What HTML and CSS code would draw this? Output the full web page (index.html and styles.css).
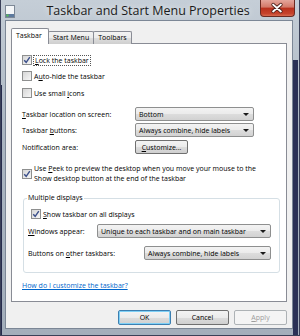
FILE: index.html
```html
<!DOCTYPE html>
<html lang="en">
<head>
    <meta charset="UTF-8">
    <title>Taskbar and Start Menu Properties</title>
    <link rel="stylesheet" href="styles.css">
</head>
<body>
    <div class="window">
        <div class="titlebar">
            <svg class="app-icon" width="10" height="13" viewBox="0 0 10 13">
                <rect x="0.5" y="0.5" width="9" height="12" fill="#f4f6f8" stroke="#7d8896"/>
                <rect x="1" y="9" width="8" height="3" fill="#5d7a9e"/>
                <circle cx="2.5" cy="10.5" r="1.2" fill="#5cb85c"/>
            </svg>
            <span class="title">Taskbar and Start Menu Properties</span>
            <div class="close">
                <svg width="35" height="17" viewBox="0 0 35 17">
                    <path d="M13.5 4.5 L21.5 11.5 M21.5 4.5 L13.5 11.5" stroke="#4a1d18" stroke-width="3.6" stroke-linecap="round"/>
                    <path d="M13.5 4.5 L21.5 11.5 M21.5 4.5 L13.5 11.5" stroke="#ffffff" stroke-width="2" stroke-linecap="round"/>
                </svg>
            </div>
        </div>

        <div class="client">
            <div class="tabs">
                <div class="tab active">Taskbar</div>
                <div class="tab">Start Menu</div>
                <div class="tab">Toolbars</div>
            </div>

            <div class="panel">
                <div class="cb-row">
                    <span class="check on"><svg width="8" height="8" viewBox="0 0 8 8"><path d="M1.2 4.2 L3.2 6.3 L6.8 1.2" fill="none" stroke="#3b4f8a" stroke-width="1.4"/></svg></span>
                    <span class="focus"><u>L</u>ock the taskbar</span>
                </div>
                <div class="cb-row">
                    <span class="check"></span>
                    <span>A<u>u</u>to-hide the taskbar</span>
                </div>
                <div class="cb-row third">
                    <span class="check"></span>
                    <span>Use small <u>i</u>cons</span>
                </div>

                <div class="field first">
                    <span class="label wide"><u>T</u>askbar location on screen:</span>
                    <div class="select w119"><span>Bottom</span><i class="arrow"></i></div>
                </div>
                <div class="field second">
                    <span class="label wide">Taskbar <u>b</u>uttons:</span>
                    <div class="select w119"><span>Always combine, hide labels</span><i class="arrow"></i></div>
                </div>
                <div class="field third">
                    <span class="label wide">Notification area:</span>
                    <div class="btn small"><u>C</u>ustomize...</div>
                </div>

                <div class="peek">
                    <span class="check on"><svg width="8" height="8" viewBox="0 0 8 8"><path d="M1.2 4.2 L3.2 6.3 L6.8 1.2" fill="none" stroke="#3b4f8a" stroke-width="1.4"/></svg></span>
                    <span class="peek-text">Use <u>P</u>eek to preview the desktop when you move your mouse to the<br>Show desktop button at the end of the taskbar</span>
                </div>

                <fieldset class="group">
                    <legend>Multiple displays</legend>
                    <div class="cb-row show">
                        <span class="check on"><svg width="8" height="8" viewBox="0 0 8 8"><path d="M1.2 4.2 L3.2 6.3 L6.8 1.2" fill="none" stroke="#3b4f8a" stroke-width="1.4"/></svg></span>
                        <span><u>S</u>how taskbar on all displays</span>
                    </div>
                    <div class="field appear">
                        <span class="label w69"><u>W</u>indows appear:</span>
                        <div class="select w174"><span>Unique to each taskbar and on main taskbar</span><i class="arrow"></i></div>
                    </div>
                    <div class="field others">
                        <span class="label w116">Buttons on <u>o</u>ther taskbars:</span>
                        <div class="select w127"><span>Always combine, hide labels</span><i class="arrow"></i></div>
                    </div>
                </fieldset>

                <a class="help" href="#">How do I customize the taskbar?</a>
            </div>

            <div class="buttons">
                <div class="btn default">OK</div>
                <div class="btn">Cancel</div>
                <div class="btn disabled"><u>A</u>pply</div>
            </div>
        </div>
    </div>
</body>
</html>
```

FILE: styles.css
```css
body {
    margin: 0;
    font-family: 'Open Sans', 'Liberation Sans', sans-serif;
    font-size: 7px;
    color: #000000;
    background: #1f2442;
}
.window {
    width: 300px;
    height: 336px;
    box-sizing: border-box;
    display: flex;
    flex-direction: column;
    border: 1px solid #3a4058;
    border-top: none;
    background:
        linear-gradient(#2b3156, #2b3156) 292px 60px / 5px 280px no-repeat,
        linear-gradient(#262b4c, #262b4c) 0 85px / 1px 260px no-repeat,
        linear-gradient(#c5ced7, #aab5c1 40%, #a3aebb);
}
.titlebar {
    height: 20px;
    display: flex;
    align-items: flex-start;
}
.app-icon {
    margin: 5px 0 0 4px;
}
.title {
    flex: 1;
    text-align: center;
    font-size: 12.5px;
    line-height: 22px;
    padding-left: 21px;
    color: #1b1b1b;
    text-shadow: 0 0 6px rgba(255, 255, 255, 0.9);
    white-space: nowrap;
}
.close {
    width: 35px;
    height: 17px;
    margin-right: 4px;
    box-sizing: border-box;
    border: 1px solid #6b2a22;
    border-top: none;
    border-radius: 0 0 4px 4px;
    background: linear-gradient(#e4a59b, #d37868 45%, #b8301d 50%, #c6432c 85%, #d86a50);
    display: flex;
}
.close svg {
    margin-left: -1px;
}
.client {
    flex: 1;
    margin: 0 6px 6px 4px;
    padding: 7px 5px 0 5px;
    background: #f0f0f0;
    border: 1px solid #7c8796;
    display: flex;
    flex-direction: column;
}
/* Tabs */
.tabs {
    display: flex;
    align-items: flex-end;
    height: 16px;
    margin-bottom: -1px;
    position: relative;
    z-index: 1;
}
.tab {
    height: 13px;
    box-sizing: border-box;
    padding: 0 4px;
    line-height: 12px;
    border: 1px solid #898c95;
    border-bottom: none;
    border-radius: 2px 2px 0 0;
    margin-left: -1px;
    background: linear-gradient(#f3f3f3, #ebebeb 50%, #dddddd 50%, #cfcfcf);
}
.tab.active {
    height: 16px;
    width: 38px;
    margin-left: 0;
    line-height: 14px;
    background: #ffffff;
    z-index: 2;
    position: relative;
}
.panel {
    height: 259px;
    box-sizing: border-box;
    background: #ffffff;
    border: 1px solid #898c95;
    padding: 8px 0 0 10px;
    display: flex;
    flex-direction: column;
    align-items: flex-start;
}
/* Checkboxes */
.cb-row {
    height: 16px;
    display: flex;
    align-items: center;
}
.cb-row.third {
    margin-top: 1px;
}
.check {
    width: 8px;
    height: 8px;
    border: 1px solid #8e8f8f;
    background: linear-gradient(135deg, #d6d6d6, #f6f6f6);
    margin-right: 2px;
    display: flex;
    flex-shrink: 0;
}
.focus {
    outline: 1px dotted #555555;
    outline-offset: 0;
    padding: 0 1px;
}
/* Form rows */
.field {
    height: 14px;
    display: flex;
    align-items: center;
}
.field.first {
    margin-top: 6px;
}
.field.second {
    margin-top: 2px;
}
.field.third {
    margin-top: 3px;
}
.label {
    white-space: nowrap;
}
.label.wide { width: 113px; }
.label.w69 { width: 69px; }
.label.w116 { width: 116px; }
.select {
    height: 14px;
    box-sizing: border-box;
    display: flex;
    align-items: center;
    padding: 0 4px 0 3px;
    border: 1px solid #8e8f8f;
    border-radius: 2px;
    background: linear-gradient(#f3f3f3, #ebebeb 50%, #dddddd 50%, #d2d2d2);
    white-space: nowrap;
}
.select span {
    flex: 1;
}
.w119 { width: 119px; }
.w174 { width: 174px; }
.w127 { width: 127px; }
.arrow {
    width: 0;
    height: 0;
    border-left: 3px solid transparent;
    border-right: 3px solid transparent;
    border-top: 3px solid #1a1a1a;
}
.btn {
    width: 53px;
    height: 15px;
    box-sizing: border-box;
    display: flex;
    align-items: center;
    justify-content: center;
    border: 1px solid #707070;
    border-radius: 2px;
    background: linear-gradient(#f3f3f3, #ebebeb 50%, #dddddd 50%, #cfcfcf);
}
.btn.small {
    height: 14px;
}
.btn.default {
    border-color: #3c7fb1;
    box-shadow: inset 0 0 0 1px #7fd0f6;
}
.btn.disabled {
    color: #9d9d9d;
    border-color: #adb2b5;
    background: #f4f4f4;
}
/* Peek */
.peek {
    margin-top: 10px;
    display: flex;
    align-items: center;
}
.peek-text {
    line-height: 10px;
    white-space: nowrap;
}
/* Group box */
.group {
    margin: 9px 0 0 1px;
    width: 257px;
    height: 80px;
    box-sizing: border-box;
    padding: 4px 0 0 4px;
    border: 1px solid #d5dfe5;
    border-radius: 3px;
}
.group legend {
    padding: 0 1px;
    margin-left: -1px;
    line-height: 10px;
}
.cb-row.show {
    height: 14px;
    margin-left: 3px;
}
.field.appear {
    margin-top: 3px;
}
.field.others {
    margin-top: 8px;
}
.help {
    margin-top: 8px;
    line-height: 10px;
    color: #0066cc;
}
/* Dialog buttons */
.buttons {
    margin-top: 8px;
    display: flex;
    justify-content: flex-end;
    gap: 5px;
}
```
